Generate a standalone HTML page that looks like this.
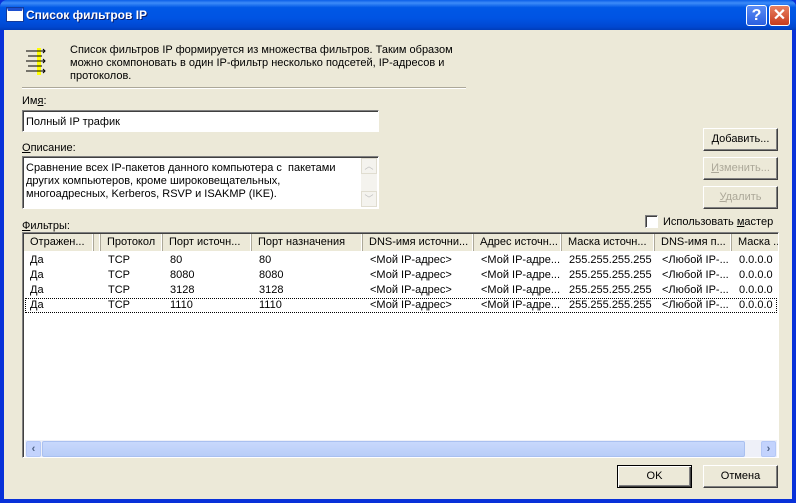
<!DOCTYPE html>
<html><head><meta charset="utf-8"><style>
*{margin:0;padding:0;box-sizing:border-box}
body{width:796px;height:503px;overflow:hidden;background:#0831d9;font-family:"Liberation Sans",sans-serif;font-size:11px;color:#000;position:relative}
.a{position:absolute;white-space:nowrap}
#title{left:0;top:0;width:796px;height:30px;background:linear-gradient(#0a5fe8 0%,#3d8bf8 10%,#0058e6 25%,#0054e3 60%,#0047d0 90%,#003cb8 100%);border-radius:7px 7px 0 0}
#body{left:4px;top:30px;width:788px;height:469px;background:#ece9d8}
.btn{position:absolute;width:75px;height:23px;background:#ece9d8;border:1px solid;border-color:#fff #404040 #404040 #fff;box-shadow:inset -1px -1px #808080;text-align:center;line-height:20px}
.dis{color:#aca899}
.in{position:absolute;background:#fff;border:1px solid;border-color:#808080 #fff #fff #808080;box-shadow:inset 1px 1px #404040}
.hd{position:absolute;top:1px;height:17px;line-height:16px;border-right:1px solid #aca899;box-shadow:inset -1px 0 #fff;padding-left:6px;background:#ece9d8;overflow:hidden}
.r{position:absolute;height:15px;line-height:14px}
.c{position:absolute;padding-left:6px}
</style></head><body>
<div class="a" id="title"></div>
<div class="a" style="left:7px;top:8px;width:16px;height:13px;background:#fff;border:1px solid #fff;border-top:3px solid #1c4fd0;box-shadow:0 0 0 1px #123a9c"></div>
<div class="a" style="left:26px;top:8px;color:#fff;font-weight:bold;font-size:12px;text-shadow:1px 1px #0a1f6e">Список фильтров IP</div>
<div class="a" style="left:746px;top:5px;width:21px;height:21px;border:1px solid #fff;border-radius:3px;background:linear-gradient(#5a8cf5,#2a5fe0);color:#fff;font-weight:bold;font-size:16px;text-align:center;line-height:19px">?</div>
<div class="a" style="left:769px;top:5px;width:21px;height:21px;border:1px solid #fff;border-radius:3px;background:linear-gradient(#e88060,#c83c1e);color:#fff;font-weight:bold;font-size:16px;text-align:center;line-height:19px">✕</div>
<div class="a" id="body"></div>
<svg class="a" style="left:25px;top:45px" width="22" height="32" viewBox="0 0 22 32"><rect x="12" y="3" width="4" height="27" fill="#ffff00"/><g stroke="#000" fill="none"><path d="M1 6h19M1 16h19M1 26h19M3 11h14M3 21h14"/><path d="M18 4l2 2-2 2M18 14l2 2-2 2M18 24l2 2-2 2"/></g></svg>
<div class="a" style="left:70px;top:44px;line-height:13px">Список фильтров IP формируется из множества фильтров. Таким образом<br>можно скомпоновать в один IP-фильтр несколько подсетей, IP-адресов и<br>протоколов.</div>
<div class="a" style="left:22px;top:87px;width:444px;height:2px;border-top:1px solid #aca899;border-bottom:1px solid #fff"></div>
<div class="a" style="left:22px;top:95px">Им<u>я</u>:</div>
<div class="in" style="left:22px;top:110px;width:357px;height:22px"></div>
<div class="a" style="left:26px;top:116px">Полный IP трафик</div>
<div class="a" style="left:22px;top:142px"><u>О</u>писание:</div>
<div class="in" style="left:22px;top:156px;width:357px;height:53px"></div>
<div class="a" style="left:26px;top:162px;line-height:13px">Сравнение всех IP-пакетов данного компьютера с&nbsp; пакетами<br>других компьютеров, кроме широковещательных,<br>многоадресных, Kerberos, RSVP и ISAKMP (IKE).</div>
<div class="a" style="left:361px;top:158px;width:16px;height:49px;background:#f4f3ee"></div>
<div class="a" style="left:361px;top:158px;width:16px;height:16px;border:1px solid #e0ddd0;color:#c0c0c0;font-size:9px;text-align:center;line-height:14px">︿</div>
<div class="a" style="left:361px;top:191px;width:16px;height:16px;border:1px solid #e0ddd0;color:#c0c0c0;font-size:9px;text-align:center;line-height:14px">﹀</div>
<div class="btn" style="left:703px;top:128px"><u>Д</u>обавить...</div>
<div class="btn dis" style="left:703px;top:157px"><u>И</u>зменить...</div>
<div class="btn dis" style="left:703px;top:186px"><u>У</u>далить</div>
<div class="a" style="left:645px;top:215px;width:13px;height:13px;background:#fff;border:1px solid;border-color:#808080 #fff #fff #808080;box-shadow:inset 1px 1px #404040"></div>
<div class="a" style="left:663px;top:216px">Использовать <u>м</u>астер</div>
<div class="a" style="left:22px;top:220px"><u>Ф</u>ильтры:</div>
<div class="in" style="left:22px;top:232px;width:757px;height:226px;overflow:hidden">
<div class="hd" style="left:1px;width:70px">Отражен...</div>
<div class="hd" style="left:71px;width:7px"></div>
<div class="hd" style="left:78px;width:62px">Протокол</div>
<div class="hd" style="left:140px;width:89px">Порт источн...</div>
<div class="hd" style="left:229px;width:111px">Порт назначения</div>
<div class="hd" style="left:340px;width:111px">DNS-имя источни...</div>
<div class="hd" style="left:451px;width:88px">Адрес источн...</div>
<div class="hd" style="left:539px;width:93px">Маска источн...</div>
<div class="hd" style="left:632px;width:77px">DNS-имя п...</div>
<div class="hd" style="left:709px;width:60px">Маска ...</div>
<div class="r" style="left:1px;top:20px;width:760px"><span class="c" style="left:0">Да</span><span class="c" style="left:78px">TCP</span><span class="c" style="left:140px">80</span><span class="c" style="left:229px">80</span><span class="c" style="left:340px">&lt;Мой IP-адрес&gt;</span><span class="c" style="left:451px">&lt;Мой IP-адре...</span><span class="c" style="left:539px">255.255.255.255</span><span class="c" style="left:632px">&lt;Любой IP-...</span><span class="c" style="left:709px">0.0.0.0</span></div>
<div class="r" style="left:1px;top:35px;width:760px"><span class="c" style="left:0">Да</span><span class="c" style="left:78px">TCP</span><span class="c" style="left:140px">8080</span><span class="c" style="left:229px">8080</span><span class="c" style="left:340px">&lt;Мой IP-адрес&gt;</span><span class="c" style="left:451px">&lt;Мой IP-адре...</span><span class="c" style="left:539px">255.255.255.255</span><span class="c" style="left:632px">&lt;Любой IP-...</span><span class="c" style="left:709px">0.0.0.0</span></div>
<div class="r" style="left:1px;top:50px;width:760px"><span class="c" style="left:0">Да</span><span class="c" style="left:78px">TCP</span><span class="c" style="left:140px">3128</span><span class="c" style="left:229px">3128</span><span class="c" style="left:340px">&lt;Мой IP-адрес&gt;</span><span class="c" style="left:451px">&lt;Мой IP-адре...</span><span class="c" style="left:539px">255.255.255.255</span><span class="c" style="left:632px">&lt;Любой IP-...</span><span class="c" style="left:709px">0.0.0.0</span></div>
<div class="r" style="left:2px;top:65px;width:752px;border:1px dotted #000;line-height:12px"><span class="c" style="left:-2px">Да</span><span class="c" style="left:76px">TCP</span><span class="c" style="left:138px">1110</span><span class="c" style="left:227px">1110</span><span class="c" style="left:338px">&lt;Мой IP-адрес&gt;</span><span class="c" style="left:449px">&lt;Мой IP-адре...</span><span class="c" style="left:537px">255.255.255.255</span><span class="c" style="left:630px">&lt;Любой IP-...</span><span class="c" style="left:707px">0.0.0.0</span></div>
<div class="a" style="left:2px;top:207px;width:752px;height:17px;background:#eef0f8"></div>
<div class="a" style="left:3px;top:208px;width:15px;height:16px;background:#c3d3fd;border:1px solid #b4c8f6;border-radius:2px;color:#4d6185;font-weight:bold;text-align:center;line-height:14px">‹</div>
<div class="a" style="left:19px;top:208px;width:703px;height:16px;background:linear-gradient(#c8d8fc,#b8cdf8);border:1px solid #a9c0f0;border-radius:2px"></div>
<div class="a" style="left:738px;top:208px;width:15px;height:16px;background:#c3d3fd;border:1px solid #b4c8f6;border-radius:2px;color:#4d6185;font-weight:bold;text-align:center;line-height:14px">›</div>
</div>
<div class="btn" style="left:617px;top:465px;border:1px solid #000;box-shadow:inset 1px 1px #fff,inset -1px -1px #404040,inset -2px -2px #808080;line-height:21px">OK</div>
<div class="btn" style="left:703px;top:465px;line-height:21px">Отмена</div>
</body></html>
